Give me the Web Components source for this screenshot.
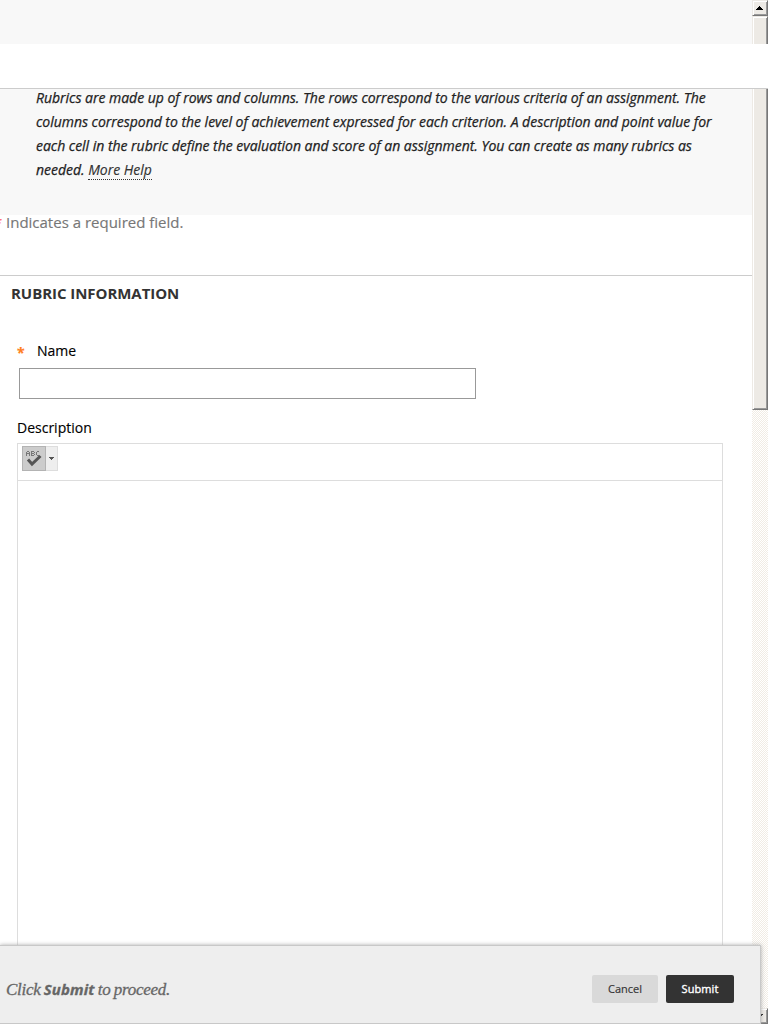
<!DOCTYPE html>
<html lang="en"><head><meta charset="utf-8"><title>Create Rubric</title>
<style>html,body{margin:0;height:100%;overflow:hidden;background:#fff}body{font-family:"Open Sans","Noto Sans",sans-serif;color:#000}</style></head>
<body>
<rubric-page></rubric-page>
<script>
const define = (name, html) => customElements.define(name, class extends HTMLElement {
  constructor() { super(); this.attachShadow({mode: 'open'}).innerHTML = html; }
});
define('page-help', `<style>
:host{display:block;box-sizing:border-box;height:215px;padding:86px 0 0 36px;background:#f8f8f8;color:#222;font-size:14px;font-style:italic;line-height:24px;letter-spacing:-.024px;-webkit-text-stroke:.25px #222}
span{display:block;white-space:nowrap}a{color:#333;border-bottom:1px dotted #333;display:inline-block;line-height:18px;-webkit-text-stroke:.15px #333}
</style><span>Rubrics are made up of rows and columns. The rows correspond to the various criteria of an assignment. The</span>
<span>columns correspond to the level of achievement expressed for each criterion. A description and point value for</span>
<span>each cell in the rubric define the evaluation and score of an assignment. You can create as many rubrics as</span>
<span>needed. <a>More Help</a></span>`);
define('required-note', `<style>
:host{display:flex;box-sizing:border-box;height:60px;font-size:15px;line-height:22px;margin-top:-4px;height:64px;color:#777;-webkit-text-stroke:.15px #777}
b{color:#ff5c67;-webkit-text-stroke:.2px #ff5c67;font-weight:400;width:6px;margin-left:-6px;padding-right:6px}
</style><b>*</b><slot></slot>`);
define('rubric-section', `<style>
:host{display:block;border-top:1px solid #ccc}
h2{margin:0;padding:7px 0 0 11px;font-size:15px;line-height:20px;height:43px;color:#333;white-space:nowrap;letter-spacing:-.05px}
</style><h2>RUBRIC INFORMATION</h2><slot></slot>`);
define('text-field', `<style>
:host{display:block;height:91px;padding:14px 0 0 17px;box-sizing:border-box}
label{display:flex;height:28px;font-size:14px;line-height:22px;-webkit-text-stroke:.15px #000}
i{font-style:normal;color:#ff7f1f;-webkit-text-stroke:.2px #ff7f1f;width:20px;line-height:26px;font-weight:700;font-size:14px}
div{box-sizing:border-box;width:457px;height:31px;border:1px solid #999;margin-left:2px;background:#fff}
</style><label><i>*</i><slot></slot></label><div></div>`);
define('spell-button', `<style>:host{display:block;width:36px;height:25px}svg{display:block}</style>
<svg width="36" height="25" viewBox="0 0 36 25" shape-rendering="crispEdges"><path fill="#eee" stroke="#ddd" d="M.5.5h35v24H.5z"/><path fill="#ccc" stroke="#b3b3b3" d="M.5.5h23v24H.5z"/>
<path fill="#777" d="M4 6h1v4H4zM5 5h2v1H5zM7 6h1v4H7zM5 7h2v1H5zM9 5h1v5H9zM10 5h2v1h-2zM12 6h1v1h-1zM10 7h2v1h-2zM12 8h1v1h-1zM10 9h2v1h-2zM14 6h1v3h-1zM15 5h2v1h-2zM15 9h2v1h-2z"/>
<path shape-rendering="auto" fill="none" stroke="#555" stroke-width="3" d="M6 13.500l4 4.500 8.500-8"/><path fill="#555" d="M27 11h5v1h-1v1h-1v1h-1v-1h-1v-1h-1z"/></svg>`);
define('rich-editor', `<style>
:host{display:block;padding-left:17px}
label{display:block;font-size:14px;line-height:22px;height:26px;-webkit-text-stroke:.15px #000}
section{width:704px;height:600px;border:1px solid #ddd}header{border-bottom:1px solid #ddd;padding:2px 0 0 4px;height:34px}
</style><label><slot></slot></label><section><header><spell-button></spell-button></header></section>`);
define('page-scrollbar', `<style>
:host{display:flex;flex-direction:column;width:16px;background:repeating-conic-gradient(#f1ece4 0 25%,#fff 0 50%) 0 0/2px 2px}
div{box-sizing:border-box;background:#edeae5;border:1px solid #fff;border-color:#edeae5 #777 #777 #edeae5;box-shadow:inset 1px 1px #fff,inset -1px -1px #999}
.a{height:16px;display:flex;align-items:center;justify-content:center}.t{height:394px}.s{flex:1}
svg{display:block;margin-left:-1px}
</style><div class="a"><svg width="7" height="4"><path d="M3 0h1v1h1v1h1v1h1v1H0V3h1V2h1V1h1z"/></svg></div><div class="t"></div><span class="s"></span><div class="a"><svg width="7" height="4"><path d="M0 0h7v1H6v1H5v1H4v1H3V3H2V2H1V1H0z"/></svg></div>`);
define('top-bar', `<style>:host{display:block;box-sizing:border-box;height:45px;background:#fff;border-bottom:1px solid #ccc}</style>`);
define('push-button', `<style>:host{display:block;box-sizing:border-box;height:28px;width:66px;border-radius:2px;background:#d9d9d9;color:#333;font-size:11px;line-height:28px;text-align:center;-webkit-text-stroke:.15px}
:host([primary]){width:68px;background:#333;color:#fff;-webkit-text-stroke:.35px;letter-spacing:.1px}</style><slot></slot>`);
define('submit-bar', `<style>
:host{display:flex;box-sizing:border-box;width:761px;height:79px;border:1px solid #c8c8c8;border-left:0;background:#eee;box-shadow:0 0 4px #aaa;padding:29px 26px 0 6px;gap:8px}
p{margin:0;flex:1;font:italic 17px/28px "Liberation Serif",serif;color:#666;white-space:nowrap;letter-spacing:-.25px;word-spacing:-.8px;-webkit-text-stroke:.3px #666}
b{font:italic 700 15px/28px "Open Sans",sans-serif;letter-spacing:.1px}
</style><p>Click <b>Submit</b> to proceed.</p><push-button>Cancel</push-button><push-button primary>Submit</push-button>`);
define('rubric-page', `<style>
:host{display:grid;grid-template-columns:1fr 16px;height:1024px;width:768px;position:relative;overflow:hidden}
main{min-width:0;height:1024px;overflow:hidden}top-bar{position:absolute;top:44px;left:0;right:0}submit-bar{position:absolute;left:0;bottom:0}
</style><main><page-help></page-help><required-note>Indicates a required field.</required-note>
<rubric-section><text-field>Name</text-field><rich-editor>Description</rich-editor></rubric-section></main>
<page-scrollbar></page-scrollbar><top-bar></top-bar><submit-bar></submit-bar>`);
</script></body></html>
